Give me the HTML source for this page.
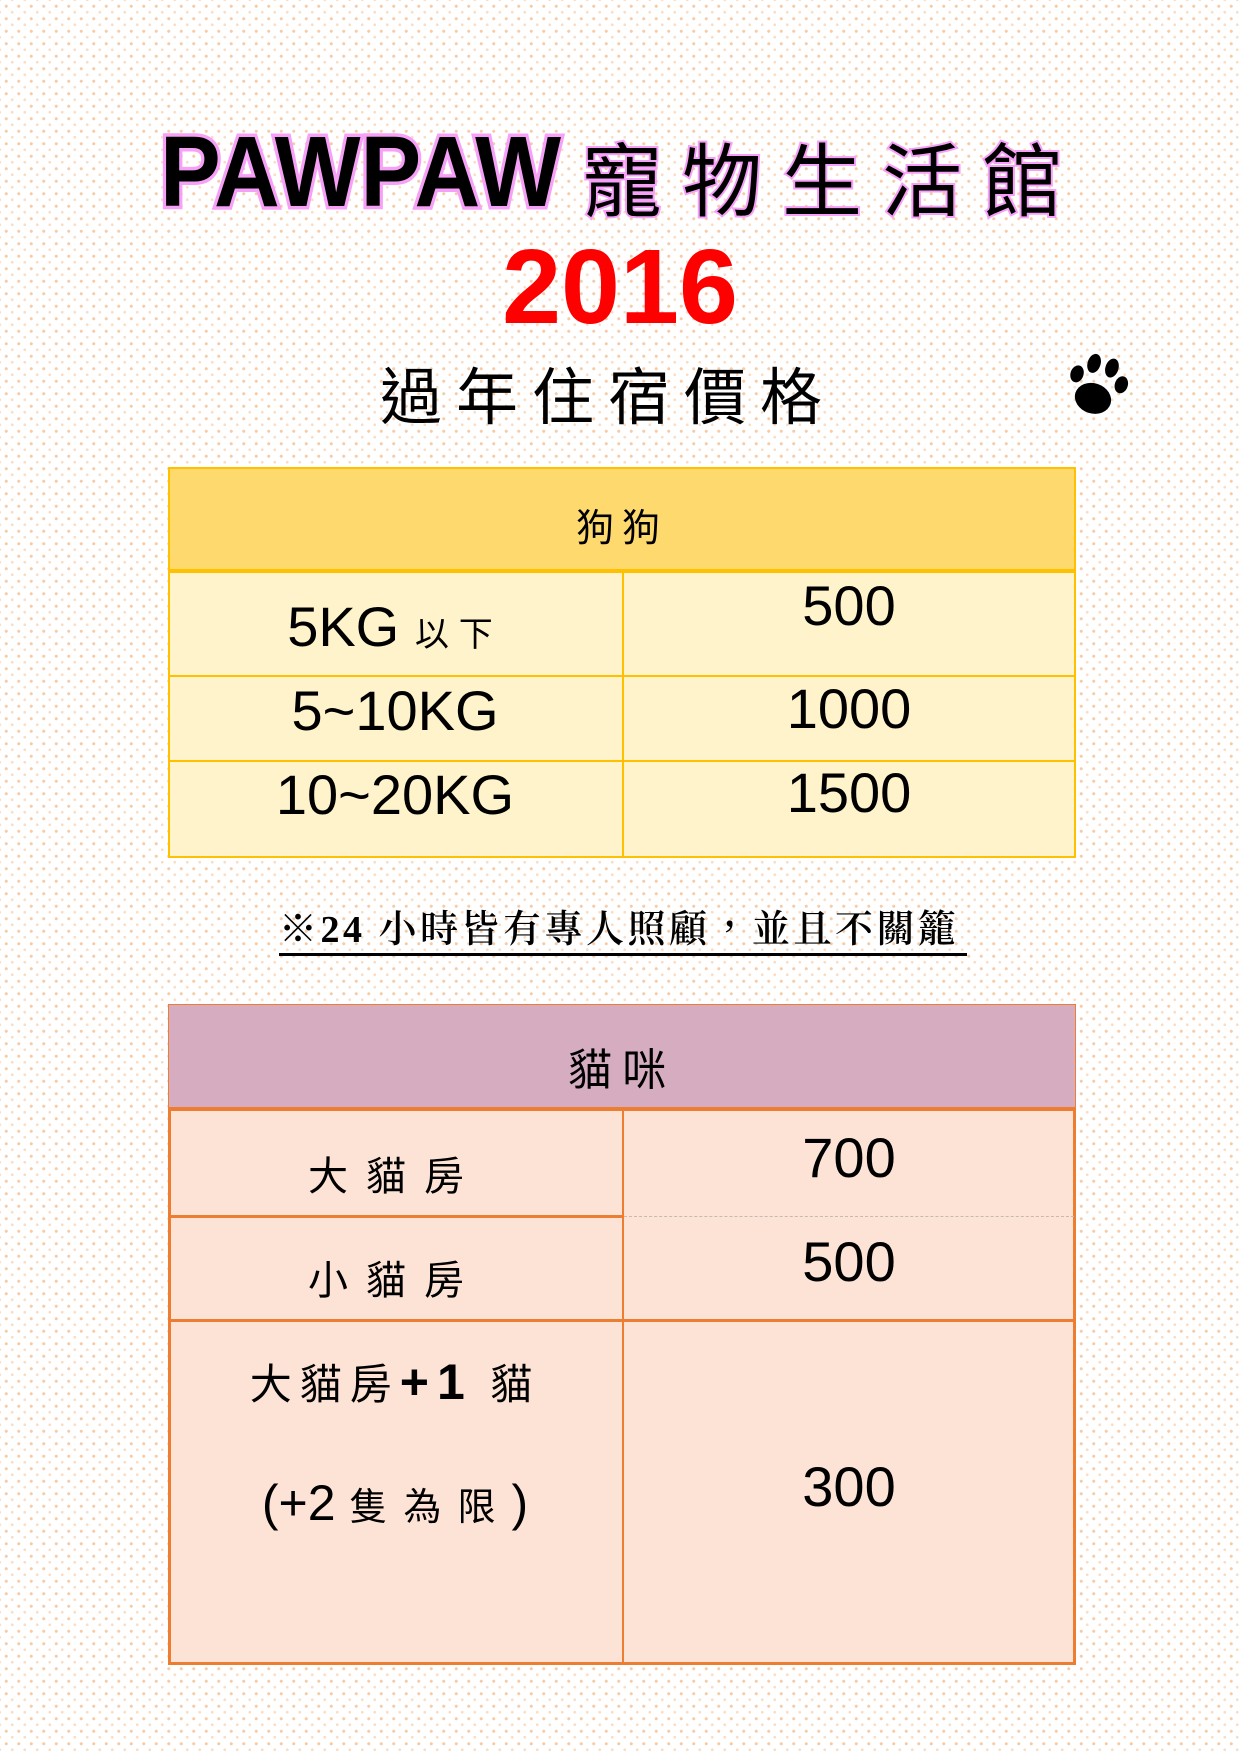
<!DOCTYPE html>
<html><head><meta charset="utf-8"><style>
html,body{margin:0;padding:0}
body{width:1240px;height:1754px;position:relative;overflow:hidden;background-color:#fff;
background-image:radial-gradient(circle,#f6cba8 1.3px,transparent 1.8px),radial-gradient(circle,#f9dcc4 1.1px,transparent 1.6px);
background-size:12.5px 12.5px,12.5px 12.5px;background-position:0 0,6px 6px;
font-family:"Liberation Sans","Noto Sans CJK TC",sans-serif;color:#000}
.a{position:absolute;white-space:nowrap}
.t{text-align:center}
.box{position:absolute;box-sizing:border-box}
</style></head><body>
<div class="a" style="left:160px;top:122px;font-size:100px;font-weight:900;font-family:'Liberation Sans',sans-serif;letter-spacing:0;transform:scaleX(0.91);transform-origin:left;-webkit-text-stroke:7px #f7a0f7;paint-order:stroke fill;line-height:100px">PAWPAW</div>
<div class="a" style="left:582px;top:126px;font-size:80px;font-family:'Noto Sans CJK TC',sans-serif;letter-spacing:20px;line-height:100px;-webkit-text-stroke:4px #f7a0f7;paint-order:stroke fill;font-weight:400">寵物生活館</div>
<div class="a t" style="left:440px;width:360px;top:232px;font-size:106px;font-weight:bold;color:#ff0000;line-height:110px">2016</div>
<div class="a" style="left:380px;top:352px;font-size:62px;font-family:'Noto Sans CJK TC',sans-serif;letter-spacing:14px;line-height:80px;font-weight:400">過年住宿價格</div>
<svg class="a" style="left:1058px;top:348px" width="78" height="76" viewBox="0 0 72 70">
<g transform="rotate(18 36 35)">
<ellipse cx="36" cy="47" rx="17" ry="14"/><ellipse cx="15" cy="30" rx="6" ry="8"/><ellipse cx="27" cy="16" rx="6" ry="9"/><ellipse cx="44" cy="15" rx="6" ry="9"/><ellipse cx="57" cy="27" rx="6" ry="8"/></g></svg>

<!-- dog table -->
<div class="box" style="left:168px;top:467px;width:908px;height:391px;border:2px solid #ffc000;background:#fff3cc"></div>
<div class="box" style="left:168px;top:467px;width:908px;height:106px;background:#fed96d;border:2px solid #ffc000;border-bottom:4px solid #ffc000"></div>
<div class="box" style="left:622px;top:572px;width:2px;height:286px;background:#ffc000"></div>
<div class="box" style="left:168px;top:675px;width:908px;height:2px;background:#ffc000"></div>
<div class="box" style="left:168px;top:760px;width:908px;height:2px;background:#ffc000"></div>
<div class="a t" style="left:168px;width:908px;top:500px;font-size:38px;line-height:50px;font-family:'Noto Sans CJK TC',sans-serif;letter-spacing:8px">狗狗</div>
<div class="a t" style="left:168px;width:454px;top:592px;font-size:56px;line-height:70px">5KG <span style="font-size:34px;font-family:'Noto Sans CJK TC',sans-serif;letter-spacing:10px">以下</span></div>
<div class="a t" style="left:168px;width:454px;top:676px;font-size:56px;line-height:70px">5~10KG</div>
<div class="a t" style="left:168px;width:454px;top:760px;font-size:56px;line-height:70px">10~20KG</div>
<div class="a t" style="left:622px;width:454px;top:571px;font-size:56px;line-height:70px">500</div>
<div class="a t" style="left:622px;width:454px;top:674px;font-size:56px;line-height:70px">1000</div>
<div class="a t" style="left:622px;width:454px;top:758px;font-size:56px;line-height:70px">1500</div>

<!-- note -->
<div class="a" style="left:279px;top:905px;font-size:38px;line-height:50px;font-family:'Liberation Serif','Noto Serif CJK TC',serif;font-weight:600;letter-spacing:3.5px">※24 小時皆有專人照顧，並且不關籠</div>
<div class="box" style="left:279px;top:953px;width:688px;height:3px;background:#000"></div>

<!-- cat table -->
<div class="box" style="left:168px;top:1004px;width:908px;height:661px;border:3px solid #ed7d31;background:#fce3d6"></div>
<div class="box" style="left:168px;top:1004px;width:908px;height:107px;background:#d6adc0;border:1px solid #ed7d31;border-bottom:4px solid #ed7d31"></div>
<div class="box" style="left:622px;top:1110px;width:2px;height:554px;background:#ed7d31"></div>
<div class="box" style="left:168px;top:1215px;width:454px;height:3px;background:#ed7d31"></div>
<div class="box" style="left:624px;top:1216px;width:450px;height:0;border-top:1px dashed #c8b8b0"></div>
<div class="box" style="left:168px;top:1319px;width:908px;height:3px;background:#ed7d31"></div>
<div class="a t" style="left:168px;width:908px;top:1038px;font-size:44px;line-height:56px;font-family:'Noto Sans CJK TC',sans-serif;letter-spacing:10px">貓咪</div>
<div class="a t" style="left:168px;width:454px;top:1145px;font-size:40px;line-height:56px;font-family:'Noto Sans CJK TC',sans-serif;letter-spacing:18px;font-weight:400">大貓房</div>
<div class="a t" style="left:168px;width:454px;top:1249px;font-size:40px;line-height:56px;font-family:'Noto Sans CJK TC',sans-serif;letter-spacing:18px;font-weight:400">小貓房</div>
<div class="a t" style="left:168px;width:454px;top:1352px;font-size:42px;line-height:60px;font-family:'Noto Sans CJK TC',sans-serif;letter-spacing:8px;font-weight:400">大貓房<b style="font-family:'Liberation Sans',sans-serif;font-size:50px">+1</b> 貓</div>
<div class="a t" style="left:168px;width:454px;top:1470px;font-size:50px;line-height:66px;font-family:'Liberation Sans','Noto Sans CJK TC',sans-serif;font-weight:400">(+2 <span style="font-family:'Noto Sans CJK TC',sans-serif;font-size:38px;letter-spacing:16px">隻為限</span>)</div>
<div class="a t" style="left:622px;width:454px;top:1123px;font-size:56px;line-height:70px">700</div>
<div class="a t" style="left:622px;width:454px;top:1227px;font-size:56px;line-height:70px">500</div>
<div class="a t" style="left:622px;width:454px;top:1452px;font-size:56px;line-height:70px">300</div>
</body></html>
